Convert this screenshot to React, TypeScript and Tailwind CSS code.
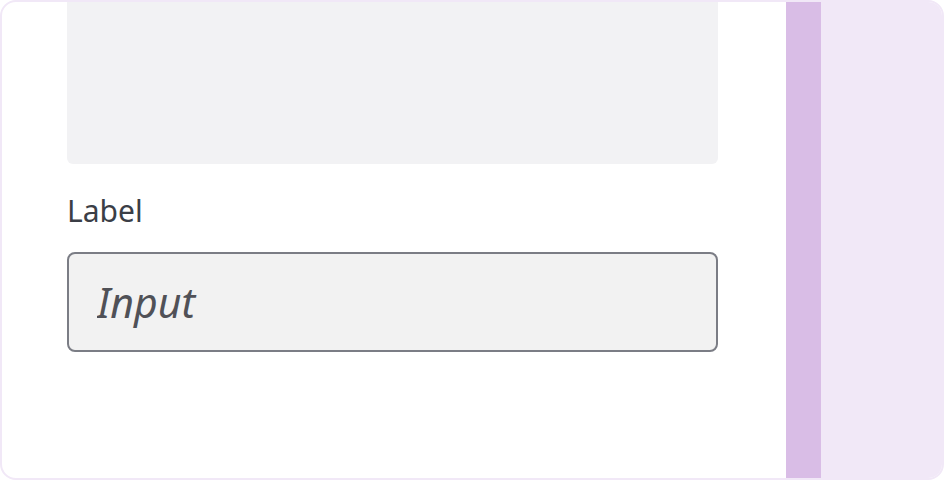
export default function App() {
  return (
    <div className="w-[944px] h-[480px] bg-white">
      <div
        className="flex h-full w-full overflow-hidden rounded-2xl border-2 border-[#f1e8f7] bg-white"
        style={{ fontFamily: '"Noto Sans", "Open Sans", sans-serif' }}
      >
        <div className="flex-1 pl-[65px] pr-[68px]">
          <div className="h-[162px] w-full rounded-b-md bg-[#f2f2f4]" />
          <label
            htmlFor="field"
            className="mt-[29px] block text-[30px] leading-[36px] text-[#3b3e46]"
          >
            Label
          </label>
          <input
            id="field"
            readOnly
            defaultValue="Input"
            className="mt-[23px] block h-[100px] w-full rounded-lg border-2 border-[#7b7d85] bg-[#f2f2f2] px-[28px] text-[41px] italic leading-[41px] text-[#505157] outline-none"
          />
        </div>
        <div className="w-[35px] bg-[#d9bde6]" />
        <div className="w-[121px] bg-[#f1e8f7]" />
      </div>
    </div>
  );
}
